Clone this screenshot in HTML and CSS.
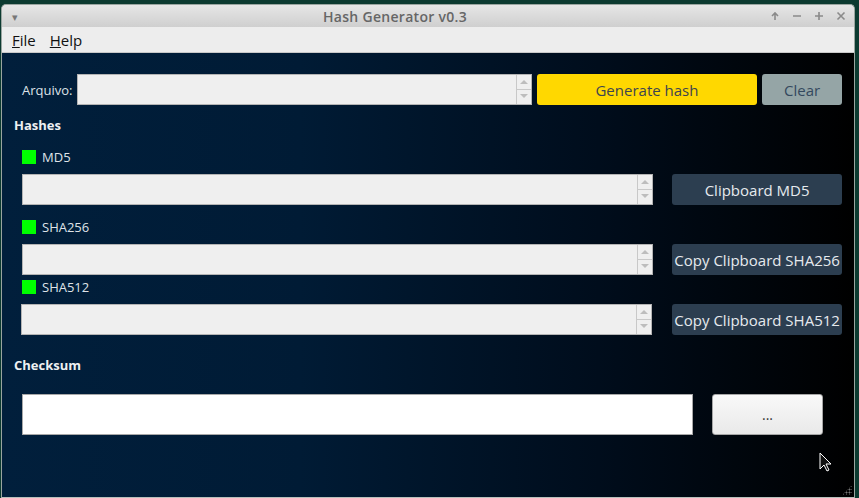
FILE: index.html
```html
<!DOCTYPE html>
<html>
<head>
<meta charset="utf-8">
<link rel="stylesheet" href="styles.css">
</head>
<body>
<div class="window">
  <div class="titlebar">
    <span class="tb-menu">&#9662;</span>
    <span class="tb-title">Hash Generator v0.3</span>
    <div class="tb-buttons">
      <svg width="10" height="10" viewBox="0 0 10 10"><path d="M5 9V2M2 5l3-3 3 3" stroke="#8a8a8a" stroke-width="1.6" fill="none"/></svg>
      <svg width="10" height="10" viewBox="0 0 10 10"><path d="M1 5h8" stroke="#8a8a8a" stroke-width="1.6"/></svg>
      <svg width="10" height="10" viewBox="0 0 10 10"><path d="M1 5h8M5 1v8" stroke="#8a8a8a" stroke-width="1.6"/></svg>
      <svg width="10" height="10" viewBox="0 0 10 10"><path d="M1.5 1.5l7 7M8.5 1.5l-7 7" stroke="#8a8a8a" stroke-width="1.6"/></svg>
    </div>
  </div>
  <div class="menubar">
    <span class="menu-item"><u>F</u>ile</span>
    <span class="menu-item"><u>H</u>elp</span>
  </div>
  <div class="content">
    <div class="row row-file">
      <span class="label">Arquivo:</span>
      <div class="textbox tb-file"><div class="spin"><span class="up"></span><span class="down"></span></div></div>
      <button class="btn btn-yellow">Generate hash</button>
      <button class="btn btn-gray">Clear</button>
    </div>
    <div class="heading h-hashes">Hashes</div>

    <div class="check c-md5"><span class="led"></span><span class="label">MD5</span></div>
    <div class="row hash-row r-md5">
      <div class="textbox tb-hash"><div class="spin"><span class="up"></span><span class="down"></span></div></div>
      <button class="btn btn-dark">Clipboard MD5</button>
    </div>

    <div class="check c-sha256"><span class="led"></span><span class="label">SHA256</span></div>
    <div class="row hash-row r-sha256">
      <div class="textbox tb-hash"><div class="spin"><span class="up"></span><span class="down"></span></div></div>
      <button class="btn btn-dark">Copy Clipboard SHA256</button>
    </div>

    <div class="check c-sha512"><span class="led"></span><span class="label">SHA512</span></div>
    <div class="row hash-row r-sha512">
      <div class="textbox tb-hash shifted"><div class="spin"><span class="up"></span><span class="down"></span></div></div>
      <button class="btn btn-dark">Copy Clipboard SHA512</button>
    </div>

    <div class="heading h-checksum">Checksum</div>
    <div class="row r-checksum">
      <div class="checkbox-input"></div>
      <button class="btn btn-light">...</button>
    </div>

    <svg class="cursor" width="14" height="22" viewBox="0 0 14 22"><path d="M1 1v16l4-4 3 6 2-1-3-6h5z" fill="#111" stroke="#fff" stroke-width="1"/></svg>
    <div class="grip"></div>
  </div>
</div>
</body>
</html>
```

FILE: styles.css
```css
* { box-sizing: border-box; }
html, body { margin: 0; padding: 0; }
body {
  width: 859px;
  height: 498px;
  background: #0c3a30;
  font-family: "Open Sans", "Noto Sans", sans-serif;
  overflow: hidden;
  padding-top: 4px;
  padding-left: 1px;
}
.window {
  width: 854px;
  height: 494px;
  border-radius: 5px 5px 0 0;
  background: #dcdcdc;
  border: 1px solid #9aa5a0;
  border-bottom: 1px solid #b8c0bc;
  display: flex;
  flex-direction: column;
  overflow: hidden;
}
.titlebar {
  height: 22px;
  background: linear-gradient(#e6e6e6, #cfcfcf);
  display: flex;
  align-items: center;
  position: relative;
  border-radius: 4px 4px 0 0;
}
.tb-menu {
  color: #777;
  font-size: 11px;
  margin-left: 10px;
  width: 10px;
}
.tb-title {
  flex: 1;
  text-align: center;
  color: #666;
  font-weight: 600;
  font-size: 14px;
  letter-spacing: 0.3px;
  margin-right: 2px;
}
.tb-buttons {
  display: flex;
  gap: 12px;
  margin-right: 8px;
}
.menubar {
  height: 26px;
  background: #ededed;
  display: flex;
  align-items: center;
  padding-left: 10px;
  gap: 14px;
  border-bottom: 1px solid #c9c9c9;
}
.menu-item {
  font-size: 15px;
  color: #111;
}
.content {
  flex: 1;
  position: relative;
  background: linear-gradient(to right, #011f3c 0%, #001b35 35%, #000d1c 70%, #000 100%);
  padding: 21px 12px 0 12px;
  color: #ddd;
}
.row { display: flex; align-items: center; }
.row-file { height: 31px; margin-left: 8px; }
.label {
  font-size: 13px;
  color: #dfe3e8;
}
.row-file .label { width: 55px; }
.textbox {
  height: 31px;
  background: #efefef;
  border: 1px solid #b4b4b4;
  display: flex;
  justify-content: flex-end;
}
.tb-file { width: 456px; }
.spin {
  width: 15px;
  height: 100%;
  border-left: 1px solid #c8c8c8;
  display: flex;
  flex-direction: column;
}
.spin span {
  flex: 1;
  position: relative;
}
.spin .up { border-bottom: 1px solid #c8c8c8; }
.spin .up::after, .spin .down::after {
  content: "";
  position: absolute;
  left: 3px;
  top: 5px;
  border-left: 4px solid transparent;
  border-right: 4px solid transparent;
}
.spin .up::after { border-bottom: 4px solid #bdbdbd; }
.spin .down::after { border-top: 4px solid #bdbdbd; top: 4px; }
.btn {
  font-family: "Open Sans", "Noto Sans", sans-serif;
  font-size: 15px;
  height: 31px;
  border: none;
  border-radius: 3px;
  padding: 0;
}
.btn-yellow {
  width: 221px;
  margin-left: 5px;
  background: #ffd800;
  color: #3d4450;
}
.btn-gray {
  width: 80px;
  margin-left: 5px;
  background: #95a5a6;
  color: #34495e;
}
.heading {
  font-weight: 700;
  font-size: 13px;
  color: #eef0f2;
  height: 16px;
  line-height: 16px;
}
.h-hashes { margin-top: 12px; }
.check {
  display: flex;
  align-items: center;
  height: 14px;
  margin-left: 8px;
}
.led {
  width: 14px;
  height: 14px;
  background: #00ff00;
  margin-right: 6px;
}
.c-md5 { margin-top: 17px; }
.c-sha256 { margin-top: 15px; }
.c-sha512 { margin-top: 5px; }
.hash-row { margin-left: 8px; margin-top: 10px; }
.tb-hash { width: 632px; }
.tb-hash.shifted { margin-left: -1px; margin-right: 1px; }
.btn-dark {
  width: 170px;
  margin-left: 19px;
  background: #2c3e50;
  color: #e6eaee;
}
.h-checksum { margin-top: 22px; }
.r-checksum { margin-left: 8px; margin-top: 21px; }
.checkbox-input {
  width: 671px;
  height: 41px;
  background: #fff;
  border: 1px solid #a8a8a8;
}
.btn-light {
  width: 111px;
  height: 41px;
  margin-left: 19px;
  background: linear-gradient(#f9f9f9, #e9e9e9);
  border: 1px solid #a6a6a6;
  color: #333;
  font-size: 14px;
}
.cursor {
  position: absolute;
  left: 817px;
  top: 399px;
}
.grip {
  position: absolute;
  right: 2px;
  bottom: 2px;
  width: 10px;
  height: 10px;
  background:
    radial-gradient(circle, #777 0.8px, transparent 1.2px) 0 0 / 3px 3px;
  clip-path: polygon(100% 0, 100% 100%, 0 100%);
}
```
